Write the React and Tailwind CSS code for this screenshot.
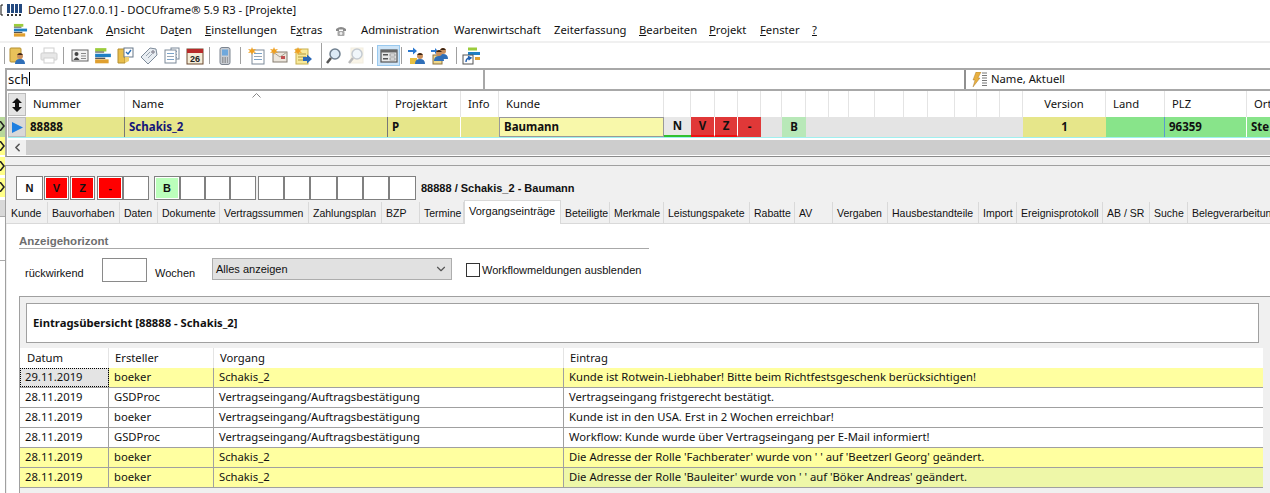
import { ChevronDown, ChevronLeft } from 'lucide-react'

const UI = "font-['Noto_Sans',sans-serif]"
const ARIAL = "font-['Liberation_Sans',Arial,sans-serif]"

// mnemonic letter of a menu entry gets underlined
function Mnemonic({ text, at }) {
  if (at === undefined) return text
  return (
    <>
      {text.slice(0, at)}
      <span className="underline">{text[at]}</span>
      {text.slice(at + 1)}
    </>
  )
}

function StackIcon({ className = 'w-[16px] h-[16px]' }) {
  return (
    <svg viewBox="0 0 16 16" className={className}>
      <rect x="1" y="1" width="10" height="3" fill="#9ccc3c" />
      <rect x="1" y="6" width="14" height="3" fill="#1f7fc4" />
      <rect x="1" y="11" width="12" height="3.5" fill="#e0a030" />
      <rect x="1" y="4" width="8" height="1" fill="#555" />
      <rect x="1" y="9.5" width="9" height="1" fill="#333" />
    </svg>
  )
}

function People({ x = 0, y = 0 }) {
  return (
    <g transform={`translate(${x} ${y})`}>
      <circle cx="5" cy="4" r="3" fill="#c98f5c" />
      <path d="M2 3 Q5 -1 8 3 Z" fill="#3a2414" />
      <path d="M0 12 Q0 7 5 7 Q10 7 10 12 Z" fill="#2f6fb8" />
    </g>
  )
}

function Doc({ x = 3, y = 1, w = 11, h = 14, fill = '#fff' }) {
  return (
    <g>
      <rect x={x} y={y} width={w} height={h} fill={fill} stroke="#7d8a99" />
      <rect x={x + 2} y={y + 3} width={w - 4} height="1" fill="#7ba3c9" />
      <rect x={x + 2} y={y + 6} width={w - 4} height="1" fill="#9aa5b1" />
      <rect x={x + 2} y={y + 9} width={w - 4} height="1" fill="#7ba3c9" />
    </g>
  )
}

function Star() {
  return <path d="M4 0 L5 2.5 L8 2 L6 4 L8 6 L5 5.5 L4 8 L3 5.5 L0 6 L2 4 L0 2 L3 2.5 Z" fill="#f0a020" />
}

function Glass({ faded }) {
  return (
    <g opacity={faded ? 0.4 : 1}>
      {faded && <rect x="4" y="1" width="12" height="15" fill="#f5e8c8" stroke="#e0d4b4" />}
      <circle cx="10" cy="7" r="5" fill="#dbe9f5" stroke="#6f7f8f" strokeWidth="1.5" />
      <path d="M6 11 L2 16" stroke="#555" strokeWidth="2.5" />
    </g>
  )
}

const toolbarIcons = {
  personFolder: (
    <g>
      <rect x="1" y="1" width="11" height="14" rx="1" fill="#e8c25a" stroke="#b48f30" />
      <People x="6" y="5" />
    </g>
  ),
  printer: (
    <g opacity="0.45">
      <rect x="4" y="1" width="10" height="5" fill="#fff" stroke="#999" />
      <rect x="1" y="6" width="16" height="7" rx="1" fill="#ccc" stroke="#999" />
      <rect x="4" y="11" width="10" height="5" fill="#fff" stroke="#999" />
    </g>
  ),
  card: (
    <g>
      <rect x="1" y="3" width="16" height="11" fill="#f2f2f2" stroke="#666" />
      <circle cx="5.5" cy="7" r="2" fill="#444" />
      <path d="M2.5 13 Q5.5 7.5 8.5 13 Z" fill="#444" />
      <path d="M10 6.5 H15 M10 9 H15 M10 11.5 H15" stroke="#888" />
    </g>
  ),
  folderCheck: (
    <g>
      <path d="M1 2 H8 V16 H1 Z" fill="#e8bd4a" stroke="#b48f30" />
      <rect x="7" y="1" width="9" height="9" fill="#fff" stroke="#667788" />
      <path d="M9 5 L11 7 L14 3" stroke="#2a70b8" fill="none" strokeWidth="1.3" />
      <path d="M8 10 H12 V14 L8 16 Z" fill="#f0d070" />
    </g>
  ),
  tag: (
    <g>
      <path d="M1 10 L10 1 L16 2 L17 8 L8 17 Z" fill="#e8edf2" stroke="#7d8a99" />
      <circle cx="13" cy="5" r="1.2" fill="#fff" stroke="#667" />
      <path d="M6 9 L10 5 M8 11 L12 7" stroke="#9aa5b1" />
    </g>
  ),
  docs: (
    <g>
      <Doc x={8} y={1} w={8} h={11} />
      <Doc x={2} y={3} w={11} h={13} />
    </g>
  ),
  calendar: (
    <g>
      <rect x="1" y="2" width="16" height="15" fill="#f4ecd8" stroke="#6d4a30" />
      <rect x="1" y="2" width="16" height="4" fill="#b82a2a" />
      <text x="9" y="15" textAnchor="middle" fontSize="9" fontWeight="700" fontFamily="Liberation Sans" fill="#222">26</text>
    </g>
  ),
  phone: (
    <g>
      <rect x="4" y="0.5" width="10" height="17" rx="2" fill="#c8ccd2" stroke="#7d8590" />
      <rect x="6" y="2.5" width="6" height="6" fill="#6fa8dc" />
      <path d="M6 11 H12 M6 13 H12 M6 15 H12" stroke="#666" strokeDasharray="1.5 1" />
    </g>
  ),
  docNew: (
    <g>
      <Doc x={4} y={3} w={12} h={14} />
      <Star />
    </g>
  ),
  mailNew: (
    <g>
      <rect x="3" y="5" width="14" height="10" fill="#ece6dc" stroke="#857c70" />
      <path d="M3 5 L10 10 L17 5" fill="none" stroke="#a89f90" />
      <rect x="11" y="9" width="4" height="3" fill="#c05050" />
      <Star />
    </g>
  ),
  noteArrow: (
    <g>
      <rect x="2" y="2" width="12" height="15" fill="#f8e99a" stroke="#c8b050" />
      <path d="M4 7 H12 M4 10 H12 M4 13 H9" stroke="#b09a40" />
      <path d="M9 10 H13 V7.5 L18 12 L13 16.5 V14 H9 Z" fill="#2a68b8" />
      <Star />
    </g>
  ),
  glass: <Glass />,
  glassFaded: <Glass faded />,
  form: (
    <g>
      <rect x="1" y="3" width="16" height="12" fill="#e8e8e8" stroke="#555" strokeWidth="1.2" />
      <rect x="1" y="3" width="16" height="2.5" fill="#666" />
      <rect x="3" y="7" width="5" height="1.5" fill="#555" />
      <rect x="3" y="11" width="5" height="1.5" fill="#555" />
      <rect x="10" y="7" width="5" height="2" fill="#fff" stroke="#666" strokeWidth="0.6" />
      <rect x="10" y="11" width="5" height="2" fill="#fff" stroke="#666" strokeWidth="0.6" />
    </g>
  ),
  peopleArrow: (
    <g>
      <path d="M0 3 H5 V0.5 L9 4 L5 7.5 V5 H0 Z" fill="#2a78d0" />
      <rect x="2" y="11" width="7" height="6" fill="#e8c040" />
      <People x="7" y="5" />
    </g>
  ),
  peopleDoc: (
    <g>
      <path d="M0 3 H4 V1 L7 4 L4 7 V5 H0 Z" fill="#2a78d0" />
      <rect x="2" y="8" width="9" height="9" fill="#efd78a" stroke="#8a7040" />
      <People x="7" y="0" />
      <People x="3" y="2" />
    </g>
  ),
  shortcut: (
    <g>
      <rect x="6" y="0.5" width="9" height="3" fill="#9ccc3c" />
      <rect x="6" y="5" width="12" height="3" fill="#1f7fc4" />
      <rect x="13" y="10" width="5" height="3" fill="#e0a030" />
      <rect x="1" y="8" width="10" height="9" fill="#fff" stroke="#555" />
      <path d="M4 15 Q4 11 8 11 M6 9.5 L9 11 L6.5 13" fill="none" stroke="#1f5fb0" strokeWidth="1.4" />
    </g>
  ),
}

function ToolIcon({ name }) {
  if (name === 'stack') return <StackIcon className="w-[18px] h-[18px]" />
  return (
    <svg viewBox="0 0 18 18" className="w-[18px] h-[18px]">
      {toolbarIcons[name]}
    </svg>
  )
}

const menu = [
  { label: 'Datenbank', at: 0, w: 'w-[71px]' },
  { label: 'Ansicht', at: 0, w: 'w-[54px]' },
  { label: 'Daten', at: 2, w: 'w-[45px]' },
  { label: 'Einstellungen', at: 0, w: 'w-[85px]' },
  { label: 'Extras', at: 1, w: 'w-[45px]' },
  { icon: true, w: 'w-[26px]' },
  { label: 'Administration', w: 'w-[93px]' },
  { label: 'Warenwirtschaft', w: 'w-[100px]' },
  { label: 'Zeiterfassung', w: 'w-[85px]' },
  { label: 'Bearbeiten', at: 0, w: 'w-[70px]' },
  { label: 'Projekt', at: 0, w: 'w-[51px]' },
  { label: 'Fenster', at: 0, w: 'w-[52px]' },
  { label: '?', at: 0, w: 'w-[12px]' },
]

// toolbar: name = icon, sep = separator; ml classes keep the picture's spacing
const tools = [
  { sep: true, cls: 'ml-[4px]' },
  { name: 'personFolder', cls: 'ml-[4px]' },
  { sep: true, cls: 'ml-[5px]' },
  { name: 'printer', cls: 'ml-[7px]' },
  { sep: true, cls: 'ml-[5px]' },
  { name: 'card', cls: 'ml-[7px]' },
  { name: 'stack', cls: 'ml-[5px]' },
  { name: 'folderCheck', cls: 'ml-[5px]' },
  { name: 'tag', cls: 'ml-[5px]' },
  { name: 'docs', cls: 'ml-[5px]' },
  { name: 'calendar', cls: 'ml-[5px]' },
  { sep: true, cls: 'ml-[5px]' },
  { name: 'phone', cls: 'ml-[6px]' },
  { sep: true, cls: 'ml-[6px]' },
  { name: 'docNew', cls: 'ml-[7px]' },
  { name: 'mailNew', cls: 'ml-[4px]' },
  { name: 'noteArrow', cls: 'ml-[6px]' },
  { sep: true, cls: 'ml-[9px] h-[25px]' },
  { name: 'glass', cls: 'ml-[3px]' },
  { name: 'glassFaded', cls: 'ml-[4px]' },
  { sep: true, cls: 'ml-[7px]' },
  { name: 'form', active: true, cls: 'ml-[4px]' },
  { sep: true, cls: 'ml-[1px]' },
  { name: 'peopleArrow', cls: 'ml-[6px]' },
  { name: 'peopleDoc', cls: 'ml-[5px]' },
  { sep: true, cls: 'ml-[7px]' },
  { name: 'shortcut', cls: 'ml-[5px]' },
]

const head = [
  { label: 'Nummer', w: 'w-[99px]' },
  { label: 'Name', w: 'w-[263px]' },
  { label: 'Projektart', w: 'w-[73px]' },
  { label: 'Info', w: 'w-[38px]' },
  { label: 'Kunde', w: 'w-[165px]' },
  { w: 'w-[27px]' }, { w: 'w-[24px]' }, { w: 'w-[23px]' }, { w: 'w-[23px]' }, { w: 'w-[21px]' },
  { w: 'w-[24px]' }, { w: 'w-[23px]' }, { w: 'w-[20px]' }, { w: 'w-[26px]' }, { w: 'w-[29px]' },
  { w: 'w-[24px]' }, { w: 'w-[27px]' }, { w: 'w-[22px]' }, { w: 'w-[23px]' }, { w: 'w-[23px]' },
  { label: 'Version', w: 'w-[83px]', center: true },
  { label: 'Land', w: 'w-[59px]' },
  { label: 'PLZ', w: 'w-[82px]' },
  { label: 'Ort', w: 'w-[40px]' },
]

const row = [
  { t: '88888', w: 'w-[99px]', bg: 'bg-[#e6e68a] border-r border-r-[#777]' },
  { t: 'Schakis_2', w: 'w-[263px]', bg: 'bg-[#e6e68a] border-r border-r-[#777] text-[#14147a]' },
  { t: 'P', w: 'w-[73px]', bg: 'bg-[#e6e68a] border-r border-r-white' },
  { t: '', w: 'w-[38px]', bg: 'bg-[#e6e68a]' },
  { t: 'Baumann', w: 'w-[165px]', bg: 'bg-[#f8f8aa] border border-[#999]' },
  { t: 'N', w: 'w-[27px]', bg: 'bg-[#e8e8e8] border-b-2 border-b-[#30c030]', center: true },
  { t: 'V', w: 'w-[24px]', bg: 'bg-[#e03838] border-r border-r-white border-b-2 border-b-[#f01010]', center: true },
  { t: 'Z', w: 'w-[23px]', bg: 'bg-[#e03838] border-r border-r-white border-b-2 border-b-[#f01010]', center: true },
  { t: '-', w: 'w-[23px]', bg: 'bg-[#e03838]', center: true },
  { t: '', w: 'w-[21px]', bg: 'bg-[#e4e4e4]' },
  { t: 'B', w: 'w-[24px]', bg: 'bg-[#b8e8b8]', center: true },
  { t: '', w: 'w-[217px]', bg: 'bg-[#e4e4e4]' },
  { t: '1', w: 'w-[83px]', bg: 'bg-[#e6e68a]', center: true },
  { t: '', w: 'w-[59px]', bg: 'bg-[#88e48a] border-r border-r-[#5a9ad0]' },
  { t: '96359', w: 'w-[82px]', bg: 'bg-[#88e48a] border-r border-r-white' },
  { t: 'Ste', w: 'w-[40px]', bg: 'bg-[#88e48a]' },
]

const statusBoxes = [
  { t: 'N', cls: 'w-[27px] bg-white' },
  { t: 'V', cls: 'w-[25px] ml-[1px] bg-[#ff0000]' },
  { t: 'Z', cls: 'w-[25px] ml-[1px] bg-[#ff0000]' },
  { t: '-', cls: 'w-[26px] ml-[2px] bg-[#ff0000]' },
  { t: '', cls: 'w-[26px] bg-white' },
  { t: 'B', cls: 'w-[26px] ml-[5px] bg-[#bbffbb]' },
  { t: '', cls: 'w-[25px] bg-white' },
  { t: '', cls: 'w-[25px] bg-white' },
  { t: '', cls: 'w-[26px] bg-white' },
  { t: '', cls: 'w-[26px] ml-[2px] bg-white' },
  { t: '', cls: 'w-[26px] bg-white' },
  { t: '', cls: 'w-[27px] bg-white' },
  { t: '', cls: 'w-[26px] bg-white' },
  { t: '', cls: 'w-[26px] bg-white' },
  { t: '', cls: 'w-[27px] bg-white' },
]

const tabs = [
  { t: 'Kunde', w: 'w-[41px]' },
  { t: 'Bauvorhaben', w: 'w-[72px]' },
  { t: 'Daten', w: 'w-[38px]' },
  { t: 'Dokumente', w: 'w-[62px]' },
  { t: 'Vertragssummen', w: 'w-[89px]' },
  { t: 'Zahlungsplan', w: 'w-[73px]' },
  { t: 'BZP', w: 'w-[38px]' },
  { t: 'Termine', w: 'w-[44px]' },
  { t: 'Vorgangseinträge', w: 'w-[97px]', active: true },
  { t: 'Beteiligte', w: 'w-[49px]' },
  { t: 'Merkmale', w: 'w-[54px]' },
  { t: 'Leistungspakete', w: 'w-[86px]' },
  { t: 'Rabatte', w: 'w-[45px]' },
  { t: 'AV', w: 'w-[38px]' },
  { t: 'Vergaben', w: 'w-[55px]' },
  { t: 'Hausbestandteile', w: 'w-[91px]' },
  { t: 'Import', w: 'w-[38px]' },
  { t: 'Ereignisprotokoll', w: 'w-[86px]' },
  { t: 'AB / SR', w: 'w-[47px]' },
  { t: 'Suche', w: 'w-[38px]' },
  { t: 'Belegverarbeitung', w: 'w-[96px]' },
]

const entries = [
  { d: '29.11.2019', u: 'boeker', v: 'Schakis_2', e: 'Kunde ist Rotwein-Liebhaber! Bitte beim Richtfestsgeschenk berücksichtigen!', bg: 'bg-[#ffffa0]', focus: true },
  { d: '28.11.2019', u: 'GSDProc', v: 'Vertragseingang/Auftragsbestätigung', e: 'Vertragseingang fristgerecht bestätigt.', bg: 'bg-white' },
  { d: '28.11.2019', u: 'boeker', v: 'Vertragseingang/Auftragsbestätigung', e: 'Kunde ist in den USA. Erst in 2 Wochen erreichbar!', bg: 'bg-white' },
  { d: '28.11.2019', u: 'GSDProc', v: 'Vertragseingang/Auftragsbestätigung', e: 'Workflow: Kunde wurde über Vertragseingang per E-Mail informiert!', bg: 'bg-white' },
  { d: '28.11.2019', u: 'boeker', v: 'Schakis_2', e: "Die Adresse der Rolle 'Fachberater' wurde von ' ' auf 'Beetzerl Georg' geändert.", bg: 'bg-[#ffffa0]' },
  { d: '28.11.2019', u: 'boeker', v: 'Schakis_2', e: "Die Adresse der Rolle 'Bauleiter' wurde von ' ' auf 'Böker Andreas' geändert.", bg: 'bg-[#ffffa0]', last: 'bg-[#eef7a8]' },
]

const strip = [
  { cls: 'h-[49px] bg-white' },
  { cls: 'h-[20px] bg-[#b8d89a]', mark: true },
  { cls: 'h-[18px] bg-[#ffff88]', mark: true },
  { cls: 'h-[2px] bg-white' },
  { cls: 'h-[18px] bg-[#ffff88]', mark: true },
  { cls: 'h-[3px] bg-white' },
  { cls: 'h-[19px] bg-[#ffff88]', mark: true },
  { cls: 'h-[3px] bg-white' },
  { cls: 'h-[16px] bg-[#d8d8d8]' },
  { cls: 'h-[10px] bg-white border-t border-[#aaa]' },
  { cls: 'h-[35px] bg-white border-b border-[#aaa]' },
  { cls: 'h-[232px] bg-white' },
]

function StatusBox({ box }) {
  return (
    <div className={`h-[24px] border border-[#808080] outline outline-1 -outline-offset-2 outline-white flex items-center justify-center text-[11px] font-bold text-[#111] ${box.cls}`}>
      {box.t}
    </div>
  )
}

export default function App() {
  return (
    <div className={`w-[1270px] h-[493px] overflow-hidden bg-white flex flex-col text-[11.25px] text-[#111] ${UI}`}>
      {/* title bar */}
      <div className="h-[20px] flex items-center">
        <svg viewBox="0 0 23 14" className="w-[23px] h-[14px] shrink-0">
          <path d="M3 2 H1 V12 H3" fill="none" stroke="#111" strokeWidth="1" />
          <rect x="7" y="1" width="3" height="9" fill="#23497f" />
          <rect x="11" y="1" width="3" height="9" fill="#23497f" />
          <rect x="15" y="1" width="3" height="9" fill="#23497f" />
          <rect x="19" y="1" width="3" height="9" fill="#23497f" />
          <path d="M7 12 H22" stroke="#333" strokeWidth="2" strokeDasharray="2 2" />
        </svg>
        <span className="ml-[5px]">Demo [127.0.0.1] - DOCUframe® 5.9 R3 - [Projekte]</span>
      </div>

      {/* menu */}
      <div className="h-[21px] flex items-center pl-[13px]">
        <StackIcon className="w-[15px] h-[15px] mr-[7px]" />
        {menu.map((m, i) =>
          m.icon ? (
            <div key={i} className={`${m.w} flex`}>
              <svg viewBox="0 0 12 12" className="w-[12px] h-[12px]">
                <path d="M1 4 Q6 0 11 4 V6 H8 V4.5 H4 V6 H1 Z" fill="#8a8a8a" />
                <rect x="2.5" y="6" width="7" height="5" rx="1" fill="#a8a8a8" />
                <circle cx="6" cy="8.5" r="1.4" fill="#eee" />
              </svg>
            </div>
          ) : (
            <div key={i} className={`${m.w} whitespace-nowrap`}>
              <Mnemonic text={m.label} at={m.at} />
            </div>
          ),
        )}
      </div>

      {/* toolbar */}
      <div className="h-[27px] border-t-2 border-[#f0f0f0] flex items-center">
        {tools.map((t, i) =>
          t.sep ? (
            <div key={i} className={`w-px h-[17px] bg-[#a0a0a0] shrink-0 ${t.cls}`} />
          ) : t.active ? (
            <div key={i} className={`w-[23px] h-[21px] bg-[#cde4f7] border border-[#99c9ef] flex items-center justify-center shrink-0 ${t.cls}`}>
              <ToolIcon name={t.name} />
            </div>
          ) : (
            <div key={i} className={`shrink-0 flex ${t.cls}`}>
              <ToolIcon name={t.name} />
            </div>
          ),
        )}
      </div>

      <div className="flex flex-1 min-h-0">
        {/* windows behind the active one, only their edge shows */}
        <div className="w-[5px] shrink-0 overflow-hidden flex flex-col">
          {strip.map((s, i) => (
            <div key={i} className={`shrink-0 relative ${s.cls}`}>
              {s.mark && (
                <svg viewBox="0 0 5 10" className="absolute left-0 top-[4px] w-[5px] h-[10px]">
                  <path d="M0 0 L4 5 L0 10" fill="none" stroke="#222" strokeWidth="1.6" />
                </svg>
              )}
            </div>
          ))}
        </div>

        <div className="flex-1 min-w-0 flex flex-col">
          {/* search row */}
          <div className="h-[23px] flex border-y-2 border-[#a8a8a8] border-l-2 shrink-0">
            <div className="w-[478px] border-r-2 border-[#a8a8a8] pl-[1px] text-[13px] leading-[19px]">
              sch<span className="inline-block w-px h-[14px] bg-black align-[-2px]" />
            </div>
            <div className="w-[481px] border-r-2 border-[#909090]" />
            <div className="flex items-center pl-[3px]">
              <svg viewBox="0 0 20 16" className="w-[20px] h-[16px]">
                <path d="M7 0 H12 L9 6 H11 L4 15 L6 8 H4 Z" fill="#e8b040" stroke="#a07020" strokeWidth="0.4" />
                <path d="M13 1 H18 M13 3.5 H18 M13 6 H18 M13 8.5 H18 M13 11 H18 M13 13.5 H18" stroke="#777" />
              </svg>
              <span className="ml-[2px]">Name, Aktuell</span>
            </div>
          </div>

          {/* project grid */}
          <div className="h-[66px] shrink-0 border-l-2 border-[#a8a8a8] border-b border-b-[#8a8a8a] pl-[1px] flex flex-col">
            <div className="h-[26px] flex">
              <div className="w-[18px] h-[23px] mt-[2px] bg-[#e4e4e4] border border-[#bbb] flex items-center justify-center shrink-0">
                <svg viewBox="0 0 10 14" className="w-[10px] h-[14px]">
                  <path d="M5 0 L10 5 H7 V9 H10 L5 14 L0 9 H3 V5 H0 Z" fill="#111" />
                </svg>
              </div>
              {head.map((h, i) => (
                <div
                  key={i}
                  className={`relative shrink-0 h-full border-r border-[#e4e4e4] flex items-center ${h.w} ${h.center ? 'justify-center' : 'pl-[7px]'}`}
                >
                  {h.label}
                  {h.label === 'Name' && (
                    <svg viewBox="0 0 9 5" className="absolute left-[127px] top-[2px] w-[9px] h-[5px]">
                      <path d="M0.5 4.5 L4.5 0.5 L8.5 4.5" fill="none" stroke="#888" />
                    </svg>
                  )}
                </div>
              ))}
            </div>
            <div className="h-[21px] flex font-bold text-[11.5px] border-b border-b-[#a0f0f0]">
              <div className="w-[18px] bg-[#d8d8d8] border border-[#bbb] flex items-center justify-center shrink-0">
                <svg viewBox="0 0 11 11" className="w-[11px] h-[11px]">
                  <path d="M0 0 L11 5.5 L0 11 Z" fill="#1e7fe0" />
                </svg>
              </div>
              {row.map((c, i) => (
                <div
                  key={i}
                  className={`shrink-0 h-full flex items-center ${c.w} ${c.bg} ${c.center ? 'justify-center' : 'pl-[4px]'}`}
                >
                  {c.t}
                </div>
              ))}
            </div>
            <div className="h-[15px] mt-[2px] flex bg-[#cdcdcd]">
              <div className="w-[18px] bg-[#f0f0f0] flex items-center justify-center">
                <ChevronLeft size={13} strokeWidth={3} className="text-[#555]" />
              </div>
            </div>
          </div>

          <div className="h-[9px] shrink-0 bg-[#f0f0f0] border-b border-[#a0a0a0]" />

          {/* detail panel */}
          <div className={`flex-1 min-h-0 bg-[#f0f0f0] border-l border-[#a0a0a0] flex flex-col ${ARIAL}`}>
            <div className="h-[36px] shrink-0 flex items-start pt-[10px] pl-[10px]">
              {statusBoxes.map((b, i) => (
                <StatusBox key={i} box={b} />
              ))}
              <span className="ml-[5px] leading-[24px] text-[11px] font-bold">88888 / Schakis_2 - Baumann</span>
            </div>

            <div className="h-[22px] shrink-0 flex items-end pl-[1px] border-b border-[#d9d9d9] whitespace-nowrap text-[10.5px]">
              {tabs.map((t, i) => (
                <div
                  key={i}
                  className={`shrink-0 overflow-hidden flex items-center pl-[4px] border-r border-[#d9d9d9] ${t.w} ${
                    t.active ? 'h-[24px] -mb-px pb-[2px] bg-white border-t border-l text-[11px] z-10' : 'h-[21px] pt-[2px] bg-[#f0f0f0]'
                  }`}
                >
                  {t.t}
                </div>
              ))}
            </div>

            <div className="flex-1 min-h-0 bg-white ml-[1px] pl-[12px] flex flex-col">
              <div className="w-[630px] h-[25px] border-b border-[#a8a8a8] text-[11.5px] leading-[14px] font-bold text-[#6e6e6e] flex items-end shrink-0">
                Anzeigehorizont
              </div>
              <div className="h-[47px] shrink-0 flex items-start pt-[9px] text-[11px]">
                <span className="ml-[6px] w-[77px] mt-[7px]">rückwirkend</span>
                <div className="w-[45px] h-[24px] border border-[#8a8a8a] bg-white" />
                <span className="ml-[8px] w-[57px] mt-[7px]">Wochen</span>
                <div className="w-[240px] h-[22px] bg-[#e1e1e1] border border-[#adadad] flex items-center justify-between px-[3px]">
                  Alles anzeigen
                  <ChevronDown size={14} className="text-[#555]" />
                </div>
                <div className="ml-[14px] mt-[5px] w-[14px] h-[14px] border border-[#333] bg-white" />
                <span className="ml-[2px] mt-[4px] whitespace-nowrap">Workflowmeldungen ausblenden</span>
              </div>

              <div className={`flex-1 min-h-0 border-t border-l border-[#a0a0a0] bg-[#f0f0f0] flex flex-col ${UI}`}>
                <div className="ml-[6px] mt-[6px] w-[1233px] h-[40px] shrink-0 border border-[#a0a0a0] bg-white flex items-center pl-[6px] font-bold text-[#111]">
                  Eintragsübersicht [88888 - Schakis_2]
                </div>
                <div className="mt-[5px] w-[1243px] shrink-0 bg-white">
                  <div className="h-[20px] flex items-center">
                    <div className="w-[89px] pl-[7px] h-full flex items-center border-r border-[#e4e4e4]">Datum</div>
                    <div className="w-[105px] pl-[6px] h-full flex items-center border-r border-[#e4e4e4]">Ersteller</div>
                    <div className="w-[350px] pl-[6px] h-full flex items-center border-r border-[#e4e4e4]">Vorgang</div>
                    <div className="pl-[6px]">Eintrag</div>
                  </div>
                  {entries.map((r, i) => (
                    <div key={i} className={`h-[20px] flex items-center border-b border-[#a0a0a0] ${r.bg}`}>
                      <div
                        className={`w-[89px] pl-[5px] h-full flex items-center border-r border-[#a0a0a0] ${
                          r.focus ? 'bg-[#e4e4e4] outline outline-1 -outline-offset-1 outline-dotted outline-black' : ''
                        }`}
                      >
                        {r.d}
                      </div>
                      <div className="w-[105px] pl-[5px] h-full flex items-center border-r border-[#a0a0a0]">{r.u}</div>
                      <div className="w-[350px] pl-[5px] h-full flex items-center border-r border-[#a0a0a0]">{r.v}</div>
                      <div className={`flex-1 pl-[5px] h-full flex items-center ${r.last || ''}`}>{r.e}</div>
                    </div>
                  ))}
                </div>
              </div>
            </div>
          </div>
        </div>
      </div>
    </div>
  )
}
